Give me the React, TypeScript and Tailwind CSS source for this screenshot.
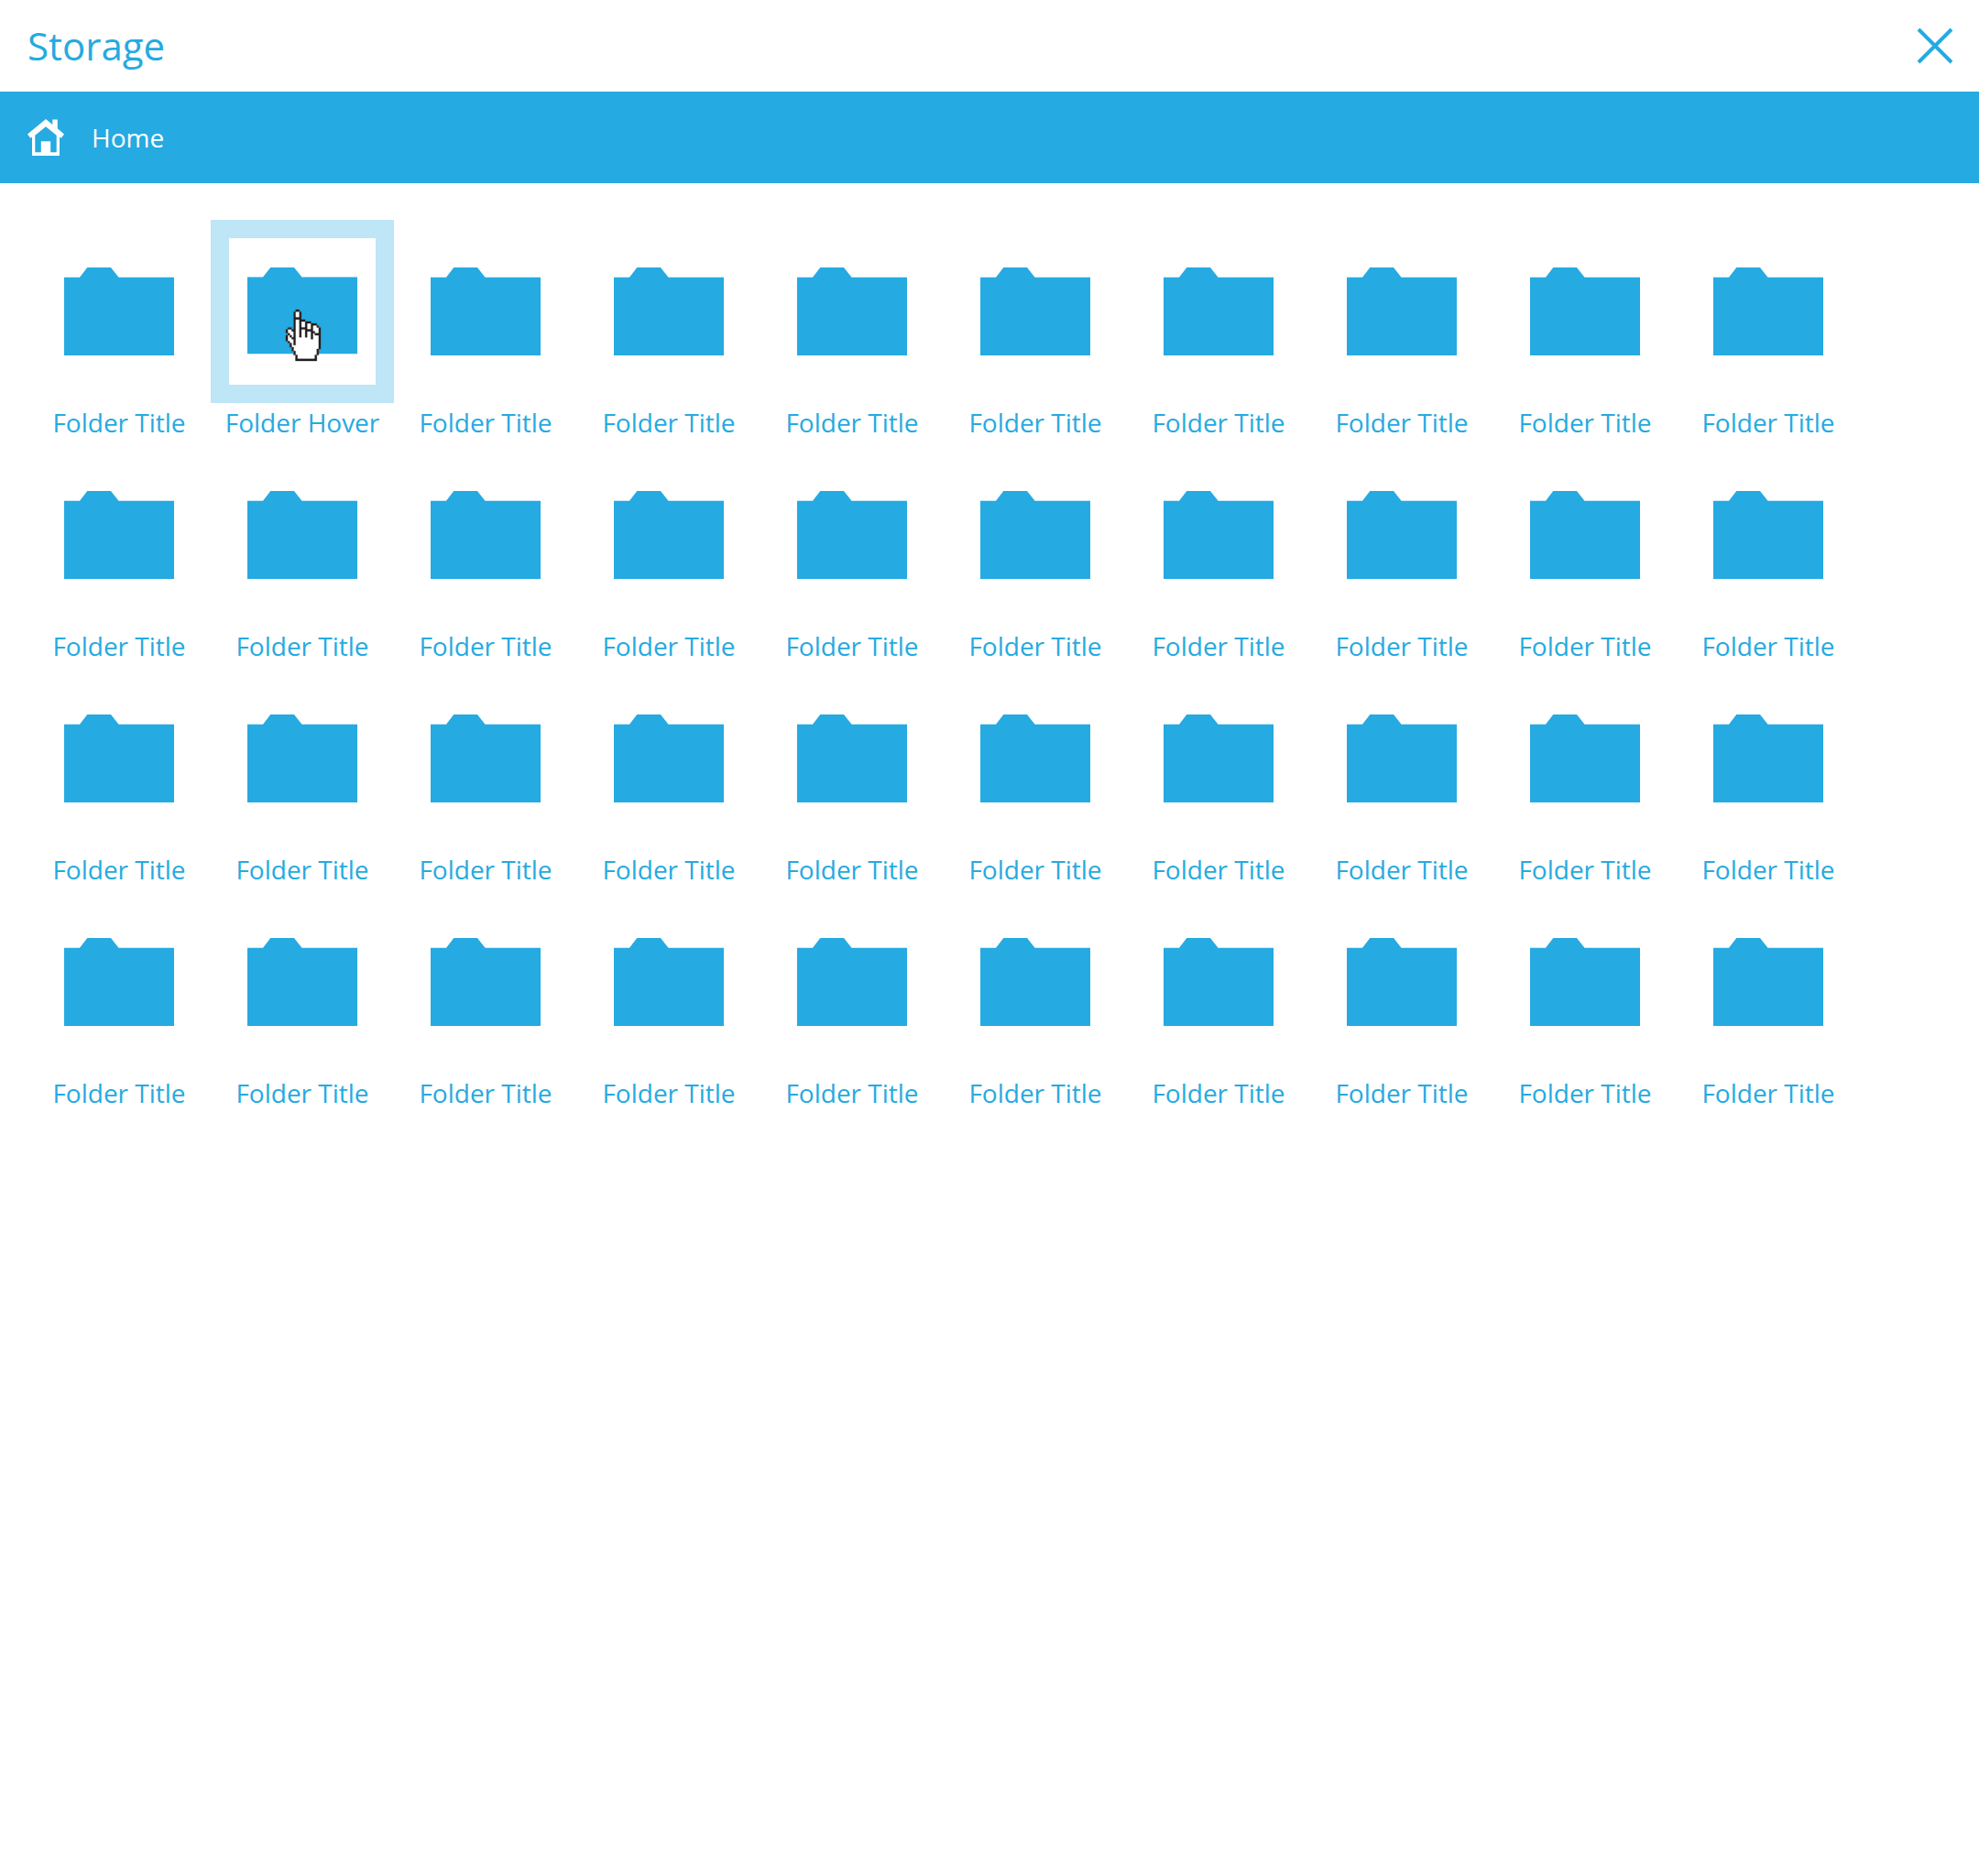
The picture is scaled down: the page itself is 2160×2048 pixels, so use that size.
import React from 'react';

type Folder = { id: number; title: string; active: boolean };

const folders: Folder[] = Array.from({ length: 40 }, (_, i) => ({
  id: i,
  title: i === 1 ? 'Folder Hover' : 'Folder Title',
  active: i === 1,
}));

function FolderIcon({ active }: { active: boolean }) {
  return (
    <svg viewBox="0 0 120 96" className="h-24 w-[120px]" fill="#25aae1" aria-hidden="true">
      <path
        d={
          active
            ? 'M0 10.4H17L25.3 0H51L59.5 10.4H120V94.2H0Z'
            : 'M0 10.8H17L25.3 0H51L59.5 10.8H120V96H0Z'
        }
      />
    </svg>
  );
}

function HomeIcon() {
  return (
    <svg viewBox="0 0 40 40" className="size-10" fill="#fff" aria-hidden="true">
      <path
        d="M20 0L27.3 6V0.4H32.8V10.3L40 16.5L36.8 20.8L35 19.4V40H5V19.4L3.2 20.8L0 16.5ZM20 8.2L8.3 17.8V36.2H14.8V24.2H25.2V36.2H31.7V17.8Z"
        fillRule="evenodd"
      />
    </svg>
  );
}

/* Outline cells of the hand pointer as [column, row, width, height]. */
const handOutline: [number, number, number, number][] = [
  [5, 0, 2, 1],
  [4, 1, 1, 17],
  [7, 1, 1, 13],
  [5, 4, 2, 1],
  [8, 5, 2, 1],
  [10, 6, 1, 8],
  [8, 9, 2, 1],
  [11, 6, 2, 1],
  [13, 7, 1, 8],
  [11, 10, 2, 1],
  [14, 7, 2, 1],
  [16, 8, 1, 1],
  [14, 11, 1, 1],
  [15, 12, 2, 1],
  [17, 9, 1, 11],
  [16, 20, 1, 3],
  [15, 23, 1, 2],
  [5, 25, 11, 1],
  [5, 23, 1, 2],
  [4, 21, 1, 2],
  [3, 19, 1, 2],
  [2, 17, 1, 2],
  [1, 16, 1, 1],
  [0, 13, 1, 3],
  [1, 12, 1, 1],
  [2, 13, 1, 1],
  [3, 14, 1, 1],
  [0, 10, 1, 2],
  [1, 9, 2, 1],
  [3, 10, 1, 1],
];

function HandCursor() {
  return (
    <svg
      viewBox="0 0 18 26"
      preserveAspectRatio="none"
      className="pointer-events-none absolute left-[82px] top-[98px] h-14 w-[38px] overflow-visible"
      aria-hidden="true"
    >
      <path
        d="M5 0H7V1H8V5H10V6H13V7H16V8H17V9H18V20H17V23H16V26H5V23H4V21H3V19H2V17H1V16H0V13H1V12H0V10H1V9H3V10H4V1H5Z"
        fill="#fff"
      />
      <path
        d={handOutline.map(([x, y, w, h]) => `M${x} ${y}h${w}v${h}h${-w}z`).join('')}
        fill="#231f20"
        stroke="#231f20"
        strokeWidth="0.15"
      />
    </svg>
  );
}

function FolderTile({ folder }: { folder: Folder }) {
  return (
    <li>
      <button
        type="button"
        className="relative flex h-[244px] w-[200px] cursor-pointer flex-col items-center text-[28px] leading-[42px]"
      >
        <span
          className={
            folder.active
              ? 'flex size-[200px] items-center justify-center border-[20px] border-[#bee6f6]'
              : 'flex size-[200px] items-center justify-center border-[20px] border-transparent'
          }
        >
          <FolderIcon active={folder.active} />
        </span>
        <span className="whitespace-nowrap">{folder.title}</span>
        {folder.active && <HandCursor />}
      </button>
    </li>
  );
}

export default function App() {
  return (
    <div className="min-h-screen bg-white font-['Open_Sans',sans-serif] text-[#25aae1]">
      <header className="flex h-[100px] items-center justify-between px-[30px]">
        <h1 className="text-[42px] leading-[56px]">Storage</h1>
        <button type="button" aria-label="Close" className="cursor-pointer">
          <svg viewBox="0 0 36 36" className="size-9 overflow-visible" stroke="#25aae1" strokeWidth="4" aria-hidden="true">
            <path d="M0 0L36 36M36 0L0 36" />
          </svg>
        </button>
      </header>
      <nav aria-label="Breadcrumb" className="flex h-[100px] items-center bg-[#25aae1] px-[30px] text-white">
        <a href="#home" className="flex items-center gap-[30px] text-[28px] leading-[42px]">
          <HomeIcon />
          Home
        </a>
      </nav>
      <main className="px-[30px] py-10">
        <ul className="flex flex-wrap">
          {folders.map((folder) => (
            <FolderTile key={folder.id} folder={folder} />
          ))}
        </ul>
      </main>
    </div>
  );
}
